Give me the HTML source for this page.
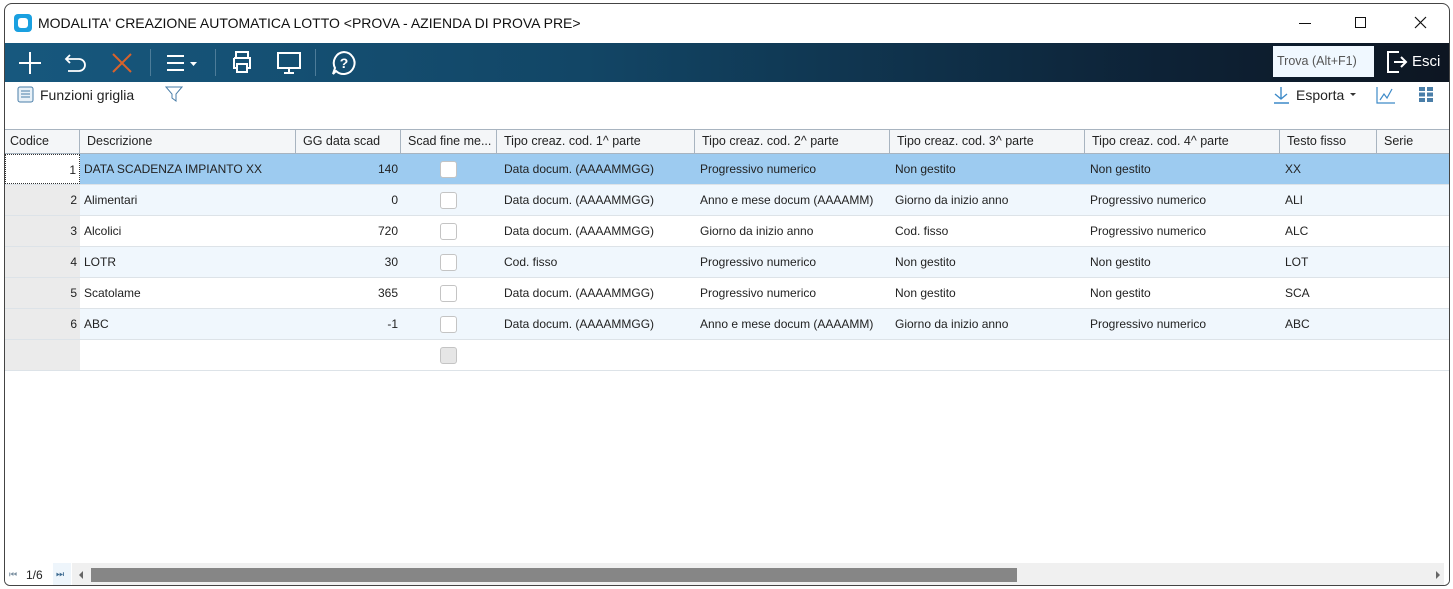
<!DOCTYPE html>
<html><head><meta charset="utf-8"><style>
*{box-sizing:border-box;margin:0;padding:0}
body{width:1453px;height:589px;background:#fff;font-family:"Liberation Sans",Tahoma,sans-serif;position:relative;overflow:hidden}
.win{position:absolute;left:4px;top:3px;width:1446px;height:583px;border:1px solid #444;border-radius:8px 8px 6px 6px;overflow:hidden;background:#fff}
.title{position:absolute;left:0;top:0;width:100%;height:39px;font-size:14px;color:#111}
.tb{position:absolute;left:0;top:39px;width:100%;height:39px;background:linear-gradient(90deg,#17587e 0%,#124666 40%,#0d2236 80%,#0d1622 100%)}
.tb svg{position:absolute}
.sep{position:absolute;top:6px;width:1px;height:27px;background:#4d7c99}
.t2{position:absolute;left:0;top:76px;width:100%;height:29px;font-size:14px;color:#222}
.grid{position:absolute;left:0;top:125px;width:100%}
.hdr{position:absolute;top:0;height:25px;border:1px solid #a8b4c0;border-left:none;background:#f4f6f8;font-size:12.5px;color:#222;line-height:23px;padding-left:7px;white-space:nowrap;overflow:hidden}
.row{position:absolute;left:0;width:1445px;height:31px;border-bottom:1px solid #dde3e8;font-size:12px;color:#222}
.c{position:absolute;top:0;height:30px;line-height:31px;white-space:nowrap;overflow:hidden}
.cb{position:absolute;left:435px;top:7px;width:17px;height:17px;border:1px solid #c4c4c4;border-radius:3px;background:#fff}
</style></head><body>
<div class="win">
<div class="title">
 <div style="position:absolute;left:9px;top:10px;width:18px;height:18px;background:#1aa0e0;border-radius:4px"><div style="position:absolute;left:4px;top:4px;width:10px;height:10px;background:#fff;border-radius:3px"></div></div>
 <div style="position:absolute;left:33px;top:11px">MODALITA' CREAZIONE AUTOMATICA LOTTO &lt;PROVA - AZIENDA DI PROVA PRE&gt;</div>
 <div style="position:absolute;left:1294px;top:19px;width:12px;height:1px;background:#111"></div>
 <div style="position:absolute;left:1350px;top:13px;width:11px;height:11px;border:1px solid #111"></div>
 <svg style="position:absolute;left:1409px;top:12px" width="13" height="13"><path d="M1 1L12 12M12 1L1 12" stroke="#111" stroke-width="1.2"/></svg>
</div>
<div class="tb">
 <svg style="left:13px;top:8px" width="24" height="24"><path d="M12 1V23M1 12H23" stroke="#fff" stroke-width="2"/></svg>
 <svg style="left:58px;top:9px" width="26" height="22"><path d="M7 3L3 7L7 11M3 7H16A6 6 0 0 1 16 19H5" stroke="#fff" stroke-width="1.8" fill="none"/></svg>
 <svg style="left:105px;top:8px" width="24" height="24"><path d="M3 3L21 21M21 3L3 21" stroke="#d9622b" stroke-width="2"/></svg>
 <div class="sep" style="left:145px"></div>
 <svg style="left:161px;top:10px" width="36" height="20"><path d="M1 3H18M1 10H18M1 17H18" stroke="#fff" stroke-width="2"/><path d="M24 9H31L27.5 13Z" fill="#fff"/></svg>
 <div class="sep" style="left:210px"></div>
 <svg style="left:225px;top:7px" width="24" height="24"><path d="M6 8V2H18V8M4 8H20V18H17M7 18H4V8M7 14H17V22H7Z" stroke="#fff" stroke-width="2" fill="none"/></svg>
 <svg style="left:271px;top:8px" width="26" height="24"><path d="M2 2H24V17H2ZM13 17V21M8 22H18" stroke="#fff" stroke-width="2" fill="none"/></svg>
 <div class="sep" style="left:310px"></div>
 <svg style="left:326px;top:7px" width="26" height="26"><path d="M13 2A11 11 0 1 1 5 21L2 24L4 18A11 11 0 0 1 13 2Z" stroke="#fff" stroke-width="2" fill="none"/><text x="13" y="18" font-size="14" font-weight="bold" fill="#fff" text-anchor="middle" font-family="Liberation Sans">?</text></svg>
 <div style="position:absolute;left:1268px;top:3px;width:101px;height:31px;background:#f0f8ff;font-size:12.5px;color:#555;line-height:31px;padding-left:4px">Trova (Alt+F1)</div>
 <svg style="left:1380px;top:7px" width="24" height="24"><path d="M14 2H3V22H14M9 12H21M16 7L21 12L16 17" stroke="#fff" stroke-width="2" fill="none"/></svg>
 <div style="position:absolute;left:1407px;top:10px;color:#fff;font-size:15px">Esci</div>
</div>
<div class="t2">
 <svg style="position:absolute;left:12px;top:6px" width="17" height="17"><rect x="1" y="1" width="15" height="15" rx="2" stroke="#4a7ea8" fill="#e8f1f8"/><path d="M4 5H13M4 8H13M4 11H13" stroke="#4a7ea8"/></svg>
 <div style="position:absolute;left:35px;top:7px">Funzioni griglia</div>
 <svg style="position:absolute;left:160px;top:5px" width="18" height="18"><path d="M1 2H17L11 9V16L7 13V9Z" stroke="#4a7ea8" fill="none"/></svg>
 <svg style="position:absolute;left:1267px;top:6px" width="20" height="18"><path d="M9 1V13M3 8L9 13L15 8M2 17H17" stroke="#3d8ac8" stroke-width="1.4" fill="none"/></svg>
 <div style="position:absolute;left:1291px;top:7px">Esporta</div>
 <div style="position:absolute;left:1345px;top:13px;border:3px solid transparent;border-top:3px solid #333"></div>
 <svg style="position:absolute;left:1371px;top:6px" width="20" height="18"><path d="M1 1V17H19M4 14L8 8L11 12L16 3" stroke="#3d8ac8" stroke-width="1.2" fill="none"/></svg>
 <svg style="position:absolute;left:1414px;top:7px" width="14" height="15"><g fill="#4a7ea8"><rect x="0" y="0" width="6" height="4"/><rect x="8" y="0" width="6" height="4"/><rect x="0" y="5.5" width="6" height="4"/><rect x="8" y="5.5" width="6" height="4"/><rect x="0" y="11" width="6" height="4"/><rect x="8" y="11" width="6" height="4"/></g></svg>
</div>
<div class="grid">
 <div class="hdr" style="left:0;width:75px;padding-left:5px">Codice</div>
 <div class="hdr" style="left:75px;width:216px">Descrizione</div>
 <div class="hdr" style="left:291px;width:105px">GG data scad</div>
 <div class="hdr" style="left:396px;width:96px">Scad fine me...</div>
 <div class="hdr" style="left:492px;width:198px">Tipo creaz. cod. 1^ parte</div>
 <div class="hdr" style="left:690px;width:195px">Tipo creaz. cod. 2^ parte</div>
 <div class="hdr" style="left:885px;width:195px">Tipo creaz. cod. 3^ parte</div>
 <div class="hdr" style="left:1080px;width:195px">Tipo creaz. cod. 4^ parte</div>
 <div class="hdr" style="left:1275px;width:97px">Testo fisso</div>
 <div class="hdr" style="left:1372px;width:74px">Serie</div>
</div>
<div id="rows"></div>
<div style="position:absolute;left:0;top:559px;width:100%;height:23px;background:#fff;font-size:12px;color:#222">
 <div style="position:absolute;left:4px;top:6px;font-size:9px;color:#7a8fa0">⏮</div>
 <div style="position:absolute;left:21px;top:5px">1/6</div>
 <div style="position:absolute;left:48px;top:0;width:18px;height:23px;background:#eef5fb;font-size:9px;color:#3d6a90;padding:6px 0 0 3px">⏭</div>
 <div style="position:absolute;left:67px;top:0;width:1372px;height:23px;background:#f0f0f0"></div>
 <div style="position:absolute;left:74px;top:8px;border:4px solid transparent;border-right:4px solid #666;border-left:none"></div>
 <div style="position:absolute;left:86px;top:5px;width:926px;height:14px;background:#868686"></div>
 <div style="position:absolute;left:1431px;top:8px;border:4px solid transparent;border-left:4px solid #666;border-right:none"></div>
</div>
</div>
<script>
var d=[["1","DATA SCADENZA IMPIANTO XX","140","Data docum. (AAAAMMGG)","Progressivo numerico","Non gestito","Non gestito","XX"],
["2","Alimentari","0","Data docum. (AAAAMMGG)","Anno e mese docum (AAAAMM)","Giorno da inizio anno","Progressivo numerico","ALI"],
["3","Alcolici","720","Data docum. (AAAAMMGG)","Giorno da inizio anno","Cod. fisso","Progressivo numerico","ALC"],
["4","LOTR","30","Cod. fisso","Progressivo numerico","Non gestito","Non gestito","LOT"],
["5","Scatolame","365","Data docum. (AAAAMMGG)","Progressivo numerico","Non gestito","Non gestito","SCA"],
["6","ABC","-1","Data docum. (AAAAMMGG)","Anno e mese docum (AAAAMM)","Giorno da inizio anno","Progressivo numerico","ABC"],
["","","","","","","",""]];
var h="";
d.forEach(function(r,i){
 var bg=i==0?"#9dcbf0":(i%2?"#f0f7fd":"#fff");
 if(i==6)bg="#fff";
 var top=150+i*31;
 h+='<div class="row" style="top:'+top+'px;background:'+bg+'">';
 h+='<div class="c" style="left:0;width:75px;text-align:right;padding-right:3px;background:'+(i==0?'#fff':'#ebebeb')+(i==0?';border:1px dotted #333':'')+'">'+r[0]+'</div>';
 h+='<div class="c" style="left:79px;width:210px">'+r[1]+'</div>';
 h+='<div class="c" style="left:291px;width:102px;text-align:right">'+r[2]+'</div>';
 h+='<div class="cb" style="'+(i==6?'background:#e6e6e6':'')+'"></div>';
 h+='<div class="c" style="left:499px;width:190px">'+r[3]+'</div>';
 h+='<div class="c" style="left:695px;width:186px">'+r[4]+'</div>';
 h+='<div class="c" style="left:890px;width:186px">'+r[5]+'</div>';
 h+='<div class="c" style="left:1085px;width:186px">'+r[6]+'</div>';
 h+='<div class="c" style="left:1280px;width:90px">'+r[7]+'</div>';
 h+='</div>';
});
document.getElementById("rows").innerHTML=h;
</script>
</body></html>
